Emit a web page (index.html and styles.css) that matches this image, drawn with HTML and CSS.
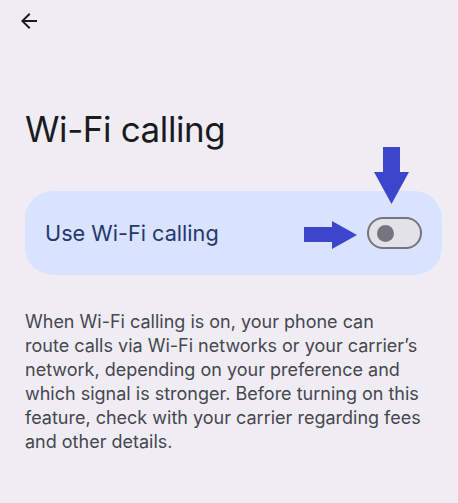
FILE: index.html
```html
<!DOCTYPE html>
<html lang="en">
<head>
    <meta charset="UTF-8">
    <meta name="viewport" content="width=device-width, initial-scale=1.0">
    <title>Wi-Fi calling</title>
    <link rel="stylesheet" href="styles.css">
</head>
<body>
    <div class="top-bar">
        <svg class="back" width="24" height="24" viewBox="0 0 24 24">
            <path d="M20 11H7.83l5.59-5.59L12 4l-8 8 8 8 1.41-1.41L7.83 13H20v-2z" fill="#1b1b1f"/>
        </svg>
    </div>

    <h1 class="title">Wi-Fi calling</h1>

    <div class="main-switch">
        <span class="switch-label">Use Wi-Fi calling</span>
        <div class="toggle">
            <div class="knob"></div>
        </div>

        <!-- callout arrows pointing at the switch -->
        <svg class="arrow arrow-down" width="36" height="58" viewBox="0 0 36 58">
            <polygon points="9,0 26,0 26,25 35,25 17.5,57 0,25 9,25" fill="#3d45cc"/>
        </svg>
        <svg class="arrow arrow-right" width="54" height="28" viewBox="0 0 54 28">
            <polygon points="0,6 28,6 28,0 53,14 28,28 28,21 0,21" fill="#3d45cc"/>
        </svg>
    </div>

    <p class="summary">When Wi-Fi calling is on, your phone can route calls via Wi-Fi networks or your carrier’s network, depending on your preference and which signal is stronger. Before turning on this feature, check with your carrier regarding fees and other details.</p>
</body>
</html>
```

FILE: styles.css
```css
body {
    margin: 0;
    background-color: #efedf3;
    font-family: Inter, "Open Sans", sans-serif;
    color: #1b1b1f;
}
.top-bar {
    height: 42px;
    display: flex;
    align-items: center;
    padding-left: 17px;
}
.back {
    display: block;
}
.title {
    margin: 63px 0 0 25px;
    font-size: 35px;
    font-weight: 400;
    line-height: 48px;
    letter-spacing: -0.4px;
}
.main-switch {
    position: relative;
    margin: 38px 16px 0 25px;
    height: 84px;
    padding: 0 20px;
    display: flex;
    align-items: center;
    justify-content: space-between;
    background-color: #d9e2ff;
    border-radius: 28px;
}
.switch-label {
    font-size: 21.7px;
    color: #24386b;
}
.toggle {
    width: 43px;
    height: 28px;
    border: 2px solid #75757d;
    border-radius: 16px;
    background-color: #e2e2e8;
    display: flex;
    align-items: center;
    padding-left: 8px;
}
.knob {
    width: 17px;
    height: 17px;
    border-radius: 50%;
    background-color: #75757d;
}
.arrow {
    position: absolute;
}
.arrow-down {
    left: 349px;
    top: -44px;
}
.arrow-right {
    left: 279px;
    top: 30px;
}
.summary {
    width: 396px;
    margin: 35px 0 0 25px;
    font-size: 18px;
    line-height: 24px;
    color: #46464f;
}
```
